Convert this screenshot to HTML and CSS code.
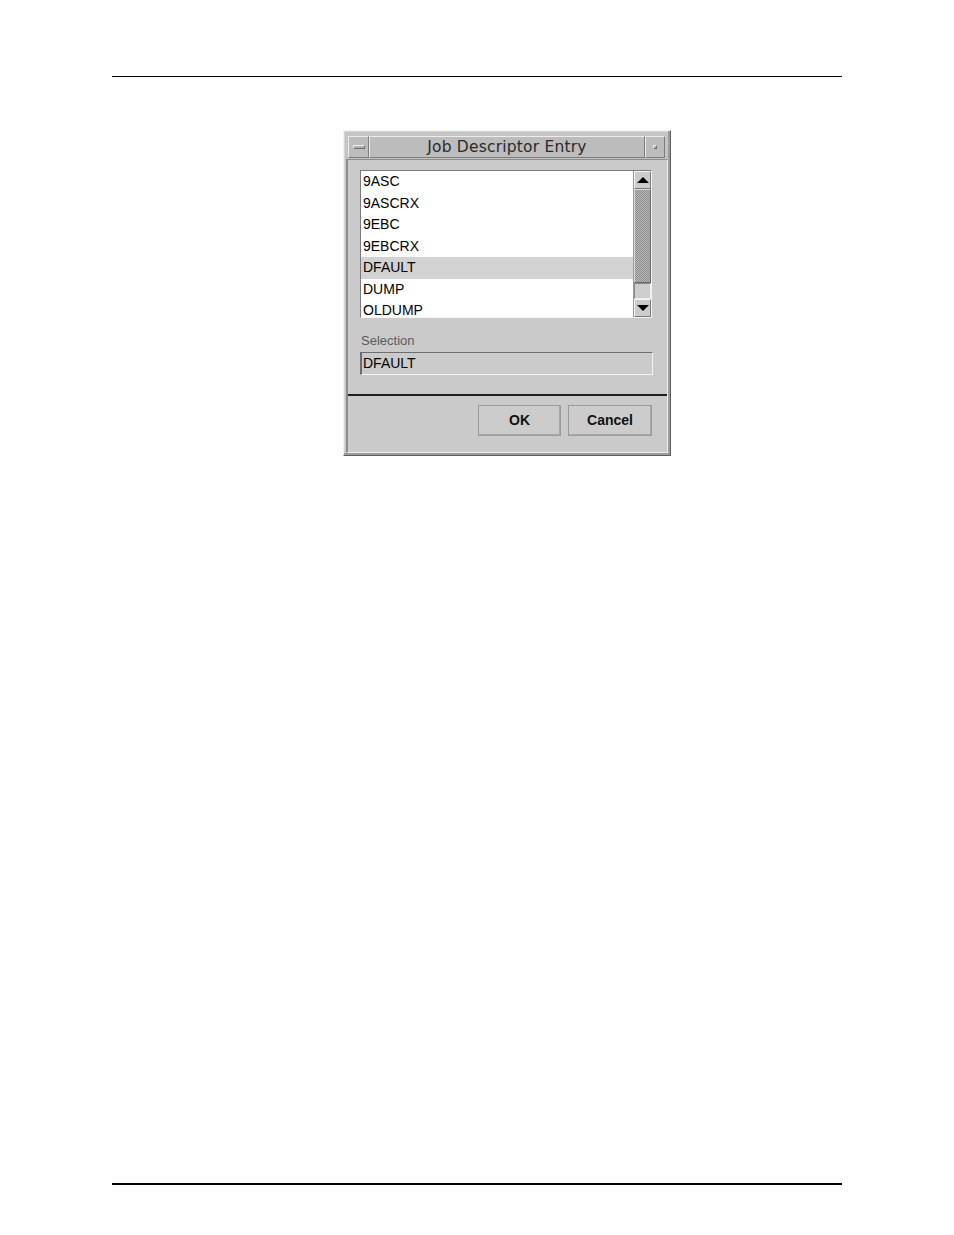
FILE: index.html
```html
<!DOCTYPE html>
<html>
<head>
<meta charset="utf-8">
<link rel="stylesheet" href="styles.css">
<title>Job Descriptor Entry</title>
</head>
<body>
<div class="page">
  <div class="rule-top"></div>
  <div class="window">
    <div class="titlebar">
      <div class="tb-btn"><span class="min-icon"></span></div>
      <div class="tb-title">Job Descriptor Entry</div>
      <div class="tb-btn tb-max"><span class="max-icon"></span></div>
    </div>
    <div class="client">
      <div class="top-section">
        <div class="listbox">
          <ul class="items">
            <li>9ASC</li>
            <li>9ASCRX</li>
            <li>9EBC</li>
            <li>9EBCRX</li>
            <li class="selected">DFAULT</li>
            <li>DUMP</li>
            <li>OLDUMP</li>
          </ul>
          <div class="scrollbar">
            <div class="arrow"><span class="tri-up"></span></div>
            <div class="thumb"></div>
            <div class="track"></div>
            <div class="arrow"><span class="tri-down"></span></div>
          </div>
        </div>
        <div class="label">Selection</div>
        <div class="field">DFAULT</div>
      </div>
      <div class="separator"></div>
      <div class="buttons">
        <div class="btn btn-ok">OK</div>
        <div class="btn btn-cancel">Cancel</div>
      </div>
    </div>
  </div>
  <div class="rule-bottom"></div>
</div>
</body>
</html>
```

FILE: styles.css
```css
* { box-sizing: border-box; }
html, body { margin: 0; padding: 0; background: #ffffff; }
body { font-family: "Liberation Sans", Arial, sans-serif; }

.page {
  padding-top: 76px;
  padding-left: 112px;
  width: 954px;
  height: 1235px;
}

.rule-top {
  width: 730px;
  height: 1px;
  background: #000;
}

.rule-bottom {
  width: 730px;
  height: 2px;
  background: #000;
  margin-top: 727px;
}

.window {
  margin-top: 53px;
  margin-left: 231px;
  width: 328px;
  height: 326px;
  border: 1px solid;
  border-color: #f2f2f2 #5e5e5e #5e5e5e #f2f2f2;
  box-shadow: inset -2px -2px 0 #9c9c9c, inset 1px 1px 0 #d6d6d6;
  background: #c4c4c4;
  padding: 2px;
  display: flex;
  flex-direction: column;
}

.titlebar {
  display: flex;
  height: 22px;
  margin: 3px 3px 1px 2px;
}

.tb-btn {
  width: 21px;
  height: 22px;
  background: #bcbcbc;
  border: 1px solid;
  border-color: #ececec #7c7c7c #7c7c7c #ececec;
  display: flex;
  align-items: center;
  justify-content: center;
}
.tb-max { width: 20px; }

.min-icon {
  width: 12px;
  height: 4px;
  background: #b0b0b0;
  border: 1px solid;
  border-color: #f0f0f0 #6e6e6e #6e6e6e #f0f0f0;
}
.max-icon {
  width: 4px;
  height: 4px;
  background: #b0b0b0;
  border: 1px solid;
  border-color: #f0f0f0 #6e6e6e #6e6e6e #f0f0f0;
}

.tb-title {
  flex: 1;
  height: 22px;
  background: #bcbcbc;
  border: 1px solid;
  border-color: #ececec #7c7c7c #7c7c7c #ececec;
  font-family: "DejaVu Sans", sans-serif;
  font-size: 15.5px;
  color: #2a2a2a;
  text-align: center;
  line-height: 20px;
  letter-spacing: 0.2px;
}

.client {
  flex: 1;
  border: 1px solid;
  border-color: #8c8c8c #eeeeee #eeeeee #8c8c8c;
  border-left-width: 2px;
  background: #cacaca;
  display: flex;
  flex-direction: column;
}

.top-section {
  padding: 10px 15px 19px 12px;
}

.listbox {
  height: 148px;
  display: flex;
  border: 1px solid;
  border-color: #7a7a7a #f4f4f4 #f4f4f4 #7a7a7a;
  background: #fff;
}

.items {
  list-style: none;
  margin: 0;
  padding: 0;
  flex: 1;
  overflow: hidden;
  font-size: 14px;
  color: #000;
}
.items li {
  height: 21.5px;
  line-height: 21.5px;
  padding-left: 2px;
}
.items li.selected { background: #d2d2d2; }

.scrollbar {
  width: 18px;
  display: flex;
  flex-direction: column;
  background: #c8c8c8;
  border-left: 1px solid #9a9a9a;
}
.arrow {
  height: 18px;
  background: #cccccc;
  border: 1px solid;
  border-color: #f6f6f6 #7a7a7a #7a7a7a #f6f6f6;
  display: flex;
  align-items: center;
  justify-content: center;
}
.tri-up {
  width: 0; height: 0;
  border-left: 6px solid transparent;
  border-right: 6px solid transparent;
  border-bottom: 6px solid #000;
}
.tri-down {
  width: 0; height: 0;
  border-left: 6px solid transparent;
  border-right: 6px solid transparent;
  border-top: 6px solid #000;
}
.thumb {
  height: 94px;
  border: 1px solid;
  border-color: #d8d8d8 #6a6a6a #6a6a6a #d8d8d8;
  background: repeating-conic-gradient(#8e8e8e 0 25%, #b8b8b8 0 50%) 0 0 / 2px 2px;
}
.track {
  flex: 1;
  background: #cdcdcd;
  border: 1px solid;
  border-color: #8a8a8a #eeeeee #eeeeee #8a8a8a;
}

.label {
  margin-top: 16px;
  padding-left: 1px;
  font-size: 13px;
  line-height: 14px;
  color: #5a5a5a;
}

.field {
  margin-top: 4px;
  height: 23px;
  width: 293px;
  border: 1px solid;
  border-color: #6e6e6e #f2f2f2 #f2f2f2 #6e6e6e;
  border-left-width: 2px;
  background: #cbcbcb;
  font-size: 14px;
  line-height: 20px;
  padding-left: 1px;
  color: #000;
}

.separator {
  height: 2px;
  background: #1e1e1e;
}

.buttons {
  display: flex;
  justify-content: flex-end;
  gap: 7px;
  padding: 9px 15px 0 0;
}

.btn {
  height: 31px;
  border: 1px solid;
  border-color: #eeeeee #6e6e6e #6e6e6e #eeeeee;
  box-shadow: inset -1px -1px 0 #a8a8a8;
  outline: 1px solid #9a9a9a;
  outline-offset: -1px;
  background: #cccccc;
  font-weight: bold;
  font-size: 14px;
  line-height: 29px;
  text-align: center;
  color: #111;
}
.btn-ok { width: 83px; }
.btn-cancel { width: 84px; }
```
